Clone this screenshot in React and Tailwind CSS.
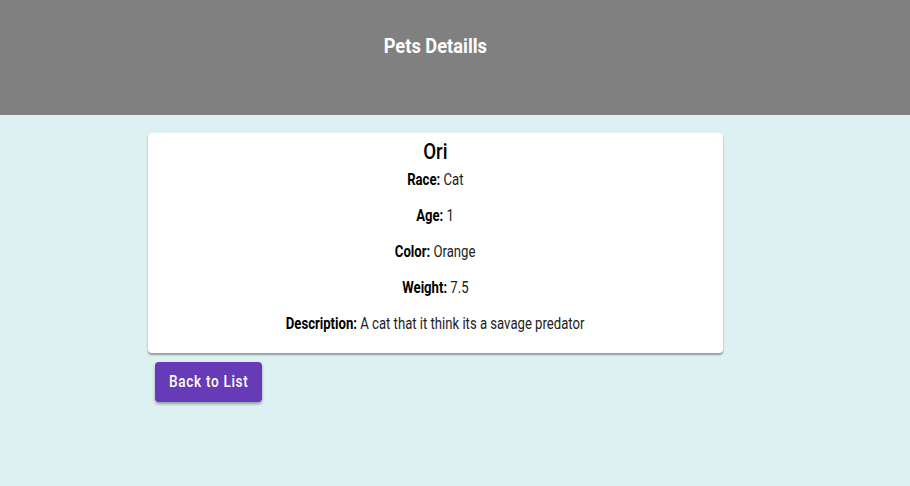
import React from 'react';

const pet = {
  name: 'Ori',
  race: 'Cat',
  age: 1,
  color: 'Orange',
  weight: 7.5,
  description: 'A cat that it think its a savage predator',
};

function Field({ label, value }) {
  return (
    <p className="text-[16px] leading-[20px] text-[#212121] origin-center scale-x-[0.82] whitespace-nowrap">
      <b className="font-bold text-black">{label}:</b> {value}
    </p>
  );
}

export default function App() {
  return (
    <div className="min-h-[486px] bg-[#ddf1f2]" style={{ fontFamily: 'Roboto, "Noto Sans", sans-serif' }}>
      <header className="h-[115px] bg-[#808080] flex justify-center pt-[34px]">
        <h1 className="text-[21px] leading-[24px] font-bold text-white scale-x-[0.87] ml-[-40px]">Pets Detaills</h1>
      </header>

      <div className="w-[575px] ml-[148px] mt-[18px]">
        <div className="bg-white rounded-[4px] shadow-[0_2px_2px_rgba(0,0,0,0.35),0_0_1px_rgba(0,0,0,0.1)] flex flex-col items-center pt-[7px] pb-[19px] gap-[16px]">
          <h2 className="text-[22px] leading-[24px] font-medium text-black scale-x-[0.85] mb-[-10px]">{pet.name}</h2>
          <Field label="Race" value={pet.race} />
          <Field label="Age" value={pet.age} />
          <Field label="Color" value={pet.color} />
          <Field label="Weight" value={pet.weight} />
          <Field label="Description" value={pet.description} />
        </div>

        <button className="mt-[9px] ml-[7px] w-[107px] h-[40px] rounded-[4px] bg-[#673ab7] text-white text-[16px] font-medium tracking-[0.05em] shadow-[0_2px_3px_rgba(0,0,0,0.35)] flex items-center justify-center">
          <span className="scale-x-[0.85] whitespace-nowrap">Back to List</span>
        </button>
      </div>
    </div>
  );
}
